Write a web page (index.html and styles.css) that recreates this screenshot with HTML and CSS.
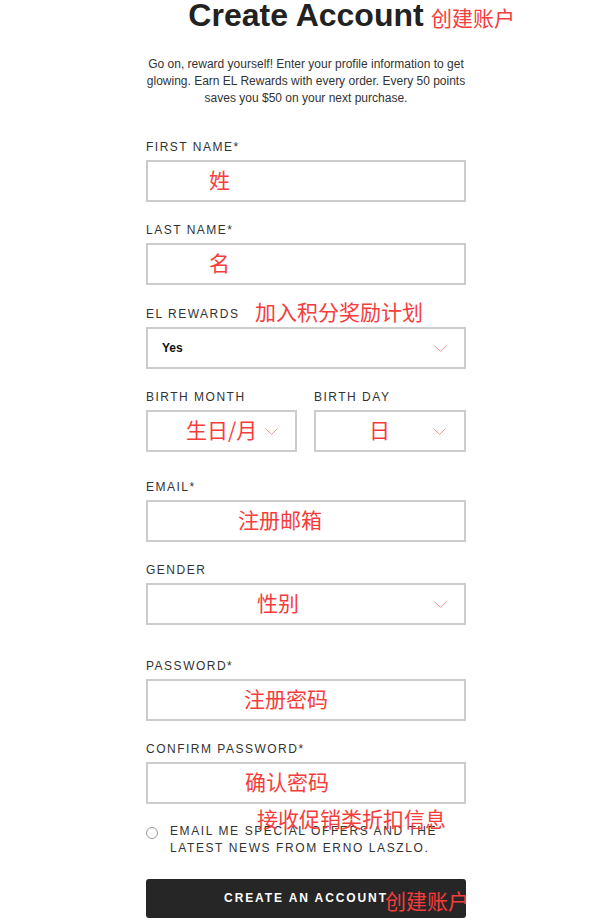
FILE: index.html
```html
<!DOCTYPE html>
<html lang="en">
<head>
<meta charset="utf-8">
<title>Create Account</title>
<link rel="stylesheet" href="styles.css">
</head>
<body>
<main class="page">
  <h1 class="title">Create Account<span class="note note-title">创建账户</span></h1>
  <p class="intro">Go on, reward yourself! Enter your profile information to get glowing. Earn EL Rewards with every order. Every 50 points saves you $50 on your next purchase.</p>

  <form class="form">
    <div class="field">
      <div class="label">FIRST NAME*</div>
      <div class="box pad-first"><span class="ph">姓</span></div>
    </div>
    <div class="field">
      <div class="label">LAST NAME*</div>
      <div class="box pad-first"><span class="ph">名</span></div>
    </div>
    <div class="field field-rewards">
      <div class="label label-note">EL REWARDS<span class="note note-rewards">加入积分奖励计划</span></div>
      <div class="box select pad-yes"><span class="value">Yes</span>
        <svg class="chev" width="13" height="7" viewBox="0 0 13 7"><polyline points="0.5,0.5 6.5,6.5 12.5,0.5" fill="none" stroke="#f09c95" stroke-width="1"/></svg>
      </div>
    </div>
    <div class="row-2 field-birth">
      <div class="col">
        <div class="label">BIRTH MONTH</div>
        <div class="box select pad-month"><span class="ph">生日/月</span>
          <svg class="chev" width="13" height="7" viewBox="0 0 13 7"><polyline points="0.5,0.5 6.5,6.5 12.5,0.5" fill="none" stroke="#f09c95" stroke-width="1"/></svg>
        </div>
      </div>
      <div class="col">
        <div class="label">BIRTH DAY</div>
        <div class="box select pad-day"><span class="ph">日</span>
          <svg class="chev" width="13" height="7" viewBox="0 0 13 7"><polyline points="0.5,0.5 6.5,6.5 12.5,0.5" fill="none" stroke="#f09c95" stroke-width="1"/></svg>
        </div>
      </div>
    </div>
    <div class="field">
      <div class="label">EMAIL*</div>
      <div class="box pad-email"><span class="ph">注册邮箱</span></div>
    </div>
    <div class="field field-gender">
      <div class="label">GENDER</div>
      <div class="box select pad-gender"><span class="ph">性别</span>
        <svg class="chev" width="13" height="7" viewBox="0 0 13 7"><polyline points="0.5,0.5 6.5,6.5 12.5,0.5" fill="none" stroke="#f09c95" stroke-width="1"/></svg>
      </div>
    </div>
    <div class="field">
      <div class="label">PASSWORD*</div>
      <div class="box pad-pass"><span class="ph">注册密码</span></div>
    </div>
    <div class="field field-confirm">
      <div class="label">CONFIRM PASSWORD*</div>
      <div class="box pad-confirm"><span class="ph">确认密码</span></div>
    </div>
    <div class="optin">
      <span class="radio"></span>
      <span class="optin-text">EMAIL ME SPECIAL OFFERS AND THE<br>LATEST NEWS FROM ERNO LASZLO.</span>
      <span class="note note-optin">接收促销类折扣信息</span>
    </div>
    <div class="submit">CREATE AN ACCOUNT<span class="note note-btn">创建账户</span></div>
  </form>
</main>
</body>
</html>
```

FILE: styles.css
```css
html, body {
  margin: 0;
  padding: 0;
  background: #ffffff;
}
body {
  font-family: "Liberation Sans", Arial, "Noto Sans CJK SC", sans-serif;
  color: #333333;
}
.page {
  position: relative;
  width: 320px;
  margin-left: 146px;
}
.title {
  position: relative;
  margin: 0;
  font-size: 32px;
  line-height: 30px;
  font-weight: bold;
  color: #222222;
  text-align: center;
}
.note {
  position: absolute;
  font-family: "Noto Sans CJK SC", sans-serif;
  font-weight: normal;
  font-size: 21px;
  line-height: 21px;
  letter-spacing: 0;
  color: #f73c3c;
  white-space: nowrap;
}
.note-title {
  left: 285px;
  top: 7px;
}
.intro {
  margin: 26px -3px 32px;
  font-size: 12px;
  line-height: 17px;
  text-align: center;
  color: #333333;
}
.form {
  display: flex;
  flex-direction: column;
  margin: 0;
}
.field {
  margin-bottom: 20px;
}
.field-rewards {
  margin-top: 1px;
}
.field-gender {
  margin-bottom: 33px;
}
.field-confirm {
  margin-bottom: 19px;
}
.label {
  font-size: 12px;
  line-height: 16px;
  letter-spacing: 1.5px;
  color: #333333;
  margin-bottom: 5px;
  white-space: nowrap;
}
.label-note {
  position: relative;
}
.note-rewards {
  left: 109px;
  top: -5px;
}
.box {
  position: relative;
  box-sizing: border-box;
  height: 42px;
  border: 2px solid #cccccc;
  display: flex;
  align-items: center;
  background: #ffffff;
}
.ph {
  font-family: "Noto Sans CJK SC", sans-serif;
  font-size: 21px;
  line-height: 21px;
  padding-bottom: 4px;
  color: #f73c3c;
  white-space: nowrap;
}
.value {
  font-size: 12px;
  font-weight: bold;
  color: #111111;
}
.select {
  justify-content: space-between;
  padding-right: 17px;
}
.chev {
  display: block;
  flex: none;
}
.pad-first { padding-left: 61px; }
.pad-yes { padding-left: 14px; }
.pad-month { padding-left: 38px; }
.pad-day { padding-left: 53px; padding-right: 18px; }
.pad-email { padding-left: 90px; }
.pad-gender { padding-left: 109px; }
.pad-pass { padding-left: 96px; }
.pad-confirm { padding-left: 97px; }
.row-2 {
  display: grid;
  grid-template-columns: 151px 152px;
  column-gap: 17px;
  margin-bottom: 27px;
}
.optin {
  position: relative;
  display: flex;
  align-items: flex-start;
  gap: 12px;
  margin-bottom: 22px;
}
.radio {
  flex: none;
  box-sizing: border-box;
  width: 12px;
  height: 12px;
  margin-top: 4px;
  border: 1px solid #9a9a9a;
  border-radius: 50%;
}
.optin-text {
  font-size: 12px;
  line-height: 17px;
  letter-spacing: 1.6px;
  color: #333333;
}
.note-optin {
  left: 111px;
  top: -15px;
}
.submit {
  position: relative;
  height: 39px;
  border-radius: 3px;
  background: #262626;
  color: #ffffff;
  font-size: 12px;
  font-weight: bold;
  letter-spacing: 1.9px;
  line-height: 38px;
  text-align: center;
}
.note-btn {
  left: 239px;
  top: 11px;
}
```
